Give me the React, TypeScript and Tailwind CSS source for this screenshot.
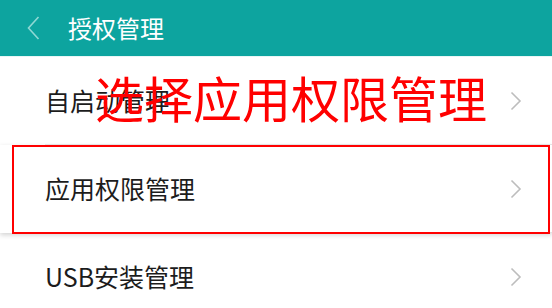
import React from "react";

const Chevron = () => (
  <svg width="12" height="20" viewBox="0 0 12 20" className="shrink-0">
    <path d="M1.5 1.5 L10 10 L1.5 18.5" fill="none" stroke="#bdbdbd" strokeWidth="1.6" />
  </svg>
);

const Row = ({ label, divider = true }: { label: string; divider?: boolean }) => (
  <div className="relative flex h-[88px] items-center pl-[45px] pr-[30px]">
    <span className="flex-1 -translate-y-[1px] text-[25px] leading-none text-[#1c1c1c]">{label}</span>
    <Chevron />
    {divider && <div className="absolute bottom-0 left-[45px] right-0 h-px bg-[#e3e3e3]" />}
  </div>
);

export default function App() {
  return (
    <div
      className="relative h-[308px] w-[552px] overflow-hidden bg-white"
      style={{ fontFamily: '"Noto Sans CJK SC", "Noto Sans", sans-serif' }}
    >
      <div className="flex h-[56px] items-center bg-[#0da49f] pl-[27px]">
        <svg width="13" height="24" viewBox="0 0 13 24" className="shrink-0">
          <path d="M11.5 1 L1.5 12 L11.5 23" fill="none" stroke="#8fd8d4" strokeWidth="1.6" />
        </svg>
        <span className="ml-[28px] text-[24px] leading-none text-white">授权管理</span>
      </div>
      <div className="h-px bg-[#e8f6f5]" />
      <div className="flex flex-col">
        <Row label="自启动管理" />
        <div className="shadow-[0_2px_5px_rgba(0,0,0,0.18)]">
          <Row label="应用权限管理" />
        </div>
        <Row label="USB安装管理" divider={false} />
      </div>
      <div className="pointer-events-none absolute left-[12px] top-[145px] h-[89px] w-[538px] border-2 border-[#ff0000]" />
      <div className="pointer-events-none absolute left-[95px] top-[72px] text-[49px] leading-none text-[#ff0000]">
        选择应用权限管理
      </div>
    </div>
  );
}
